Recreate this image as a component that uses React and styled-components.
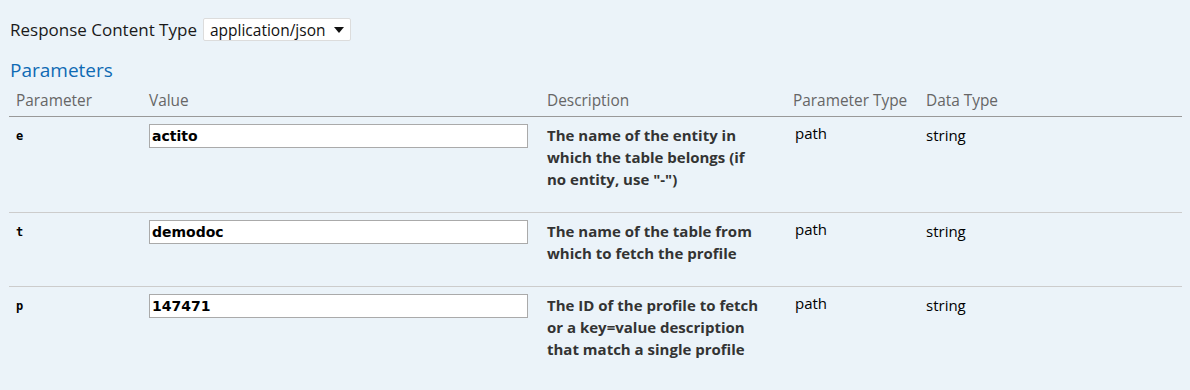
import React from "react";
import styled, { createGlobalStyle } from "styled-components";

const params = [
  {
    name: "e",
    value: "actito",
    description: 'The name of the entity in which the table belongs (if no entity, use "-")',
    paramType: "path",
    dataType: "string",
  },
  {
    name: "t",
    value: "demodoc",
    description: "The name of the table from which to fetch the profile",
    paramType: "path",
    dataType: "string",
  },
  {
    name: "p",
    value: "147471",
    description:
      "The ID of the profile to fetch or a key=value description that match a single profile",
    paramType: "path",
    dataType: "string",
  },
];

function App() {
  return (
    <>
      <GlobalStyle />
      <Content>
        <ContentTypeRow>
          <Label>Response Content Type</Label>
          <FakeSelect>
            <span>application/json</span>
            <svg width="10" height="6" viewBox="0 0 10 6">
              <path d="M0 0 L10 0 L5 6 Z" fill="#111" />
            </svg>
          </FakeSelect>
        </ContentTypeRow>

        <Heading>Parameters</Heading>

        <Table>
          <colgroup>
            <col style={{ width: 133 }} />
            <col style={{ width: 398 }} />
            <col style={{ width: 246 }} />
            <col style={{ width: 133 }} />
            <col />
          </colgroup>
          <thead>
            <tr>
              <Th>Parameter</Th>
              <Th>Value</Th>
              <Th>Description</Th>
              <Th>Parameter Type</Th>
              <Th>Data Type</Th>
            </tr>
          </thead>
          <tbody>
            {params.map((p) => (
              <Row key={p.name}>
                <Td>
                  <Code>{p.name}</Code>
                </Td>
                <Td>
                  <ValueInput defaultValue={p.value} />
                </Td>
                <Td $wrap>
                  <Description>{p.description}</Description>
                </Td>
                <Td $shift>
                  <Plain>{p.paramType}</Plain>
                </Td>
                <Td>
                  <Plain>{p.dataType}</Plain>
                </Td>
              </Row>
            ))}
          </tbody>
        </Table>
      </Content>
    </>
  );
}

export default App;

const GlobalStyle = createGlobalStyle`
  html, body {
    margin: 0;
    background: #ebf3f9;
    font-family: "Open Sans", "Noto Sans", sans-serif;
  }
`;

const Content = styled.div`
  padding: 18px 8px 0 9px;
`;

const ContentTypeRow = styled.div`
  display: flex;
  align-items: center;
  gap: 6px;
  height: 23px;
  padding-left: 1px;
`;

const Label = styled.span`
  font-size: 17px;
  color: #1a1a1a;
`;

const FakeSelect = styled.div`
  display: flex;
  align-items: center;
  justify-content: space-between;
  box-sizing: border-box;
  width: 148px;
  height: 23px;
  padding: 0 6px 0 6px;
  background: #fff;
  border: 1px solid #dcdcdc;
  border-radius: 2px;
  font-size: 15.5px;
  color: #111;
`;

const Heading = styled.h4`
  margin: 17px 0 0;
  padding-left: 1px;
  font-size: 19px;
  line-height: 24px;
  font-weight: normal;
  color: #0f6ab4;
`;

const Table = styled.table`
  width: 100%;
  table-layout: fixed;
  border-collapse: collapse;
`;

const Th = styled.th`
  padding: 9px 7px 5px;
  text-align: left;
  font-size: 15.4px;
  line-height: 20px;
  font-weight: normal;
  color: #666;
  border-bottom: 1px solid #999;
`;

const Row = styled.tr`
  & + & td {
    border-top: 1px solid #ccc;
  }
`;

const Td = styled.td`
  vertical-align: top;
  padding: ${(p) =>
    p.$shift ? "5px 7px 22px 9px" : p.$wrap ? "7px 24px 22px 7px" : "7px 7px 22px"};
`;

const Code = styled.code`
  display: block;
  padding-top: 4px;
  font-family: "DejaVu Sans Mono", "Liberation Mono", monospace;
  font-weight: bold;
  font-size: 12px;
  line-height: 16px;
  color: #000;
`;

const ValueInput = styled.input`
  box-sizing: border-box;
  width: 379px;
  height: 24px;
  margin: 0;
  padding: 0 2px;
  border: 1px solid #aaa;
  background: #fff;
  font-family: "DejaVu Sans", Verdana, sans-serif;
  font-weight: bold;
  font-size: 14px;
  color: #000;
  outline: none;
`;

const Description = styled.div`
  font-size: 15px;
  line-height: 22px;
  font-weight: bold;
  color: #333;
`;

const Plain = styled.div`
  font-size: 15px;
  line-height: 22px;
  color: #000;
`;
